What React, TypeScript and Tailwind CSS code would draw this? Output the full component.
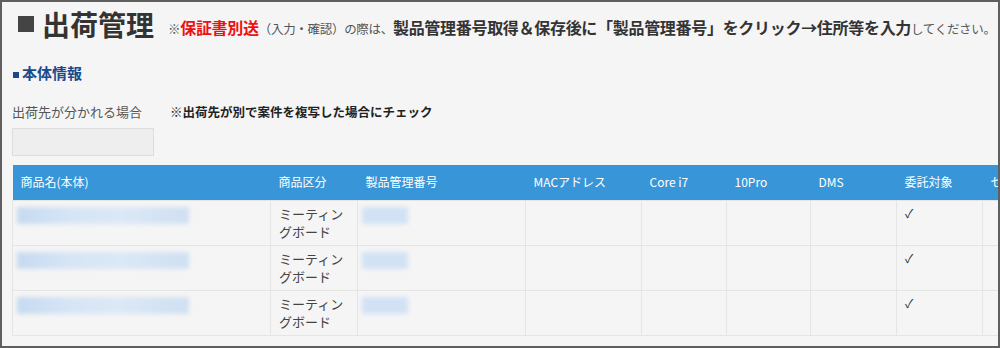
export default function App() {
  const cols = [
    { label: "商品名(本体)", w: "w-[258px]" },
    { label: "商品区分", w: "w-[87px]" },
    { label: "製品管理番号", w: "w-[168px]" },
    { label: "MACアドレス", w: "w-[116px]" },
    { label: "Core i7", w: "w-[85px]" },
    { label: "10Pro", w: "w-[84px]" },
    { label: "DMS", w: "w-[86px]" },
    { label: "委託対象", w: "w-[86px]" },
    { label: "セット", w: "w-[90px]" },
  ];
  const rows = [1, 2, 3];

  return (
    <div className="w-[1000px] h-[348px] border-2 border-[#5f5f5f] bg-[#f5f5f5] overflow-hidden font-['Noto_Sans_CJK_JP','Noto_Sans',sans-serif] text-[#333]">
      <div className="pl-[16px] pt-[7px] flex items-center whitespace-nowrap">
        <div className="w-[16px] h-[16px] bg-[#444] mr-[8px]" />
        <h1 className="text-[28px] leading-[30px] font-bold text-[#333]">出荷管理</h1>
        <p className="ml-[14px] mt-[6px] text-[12.5px] text-[#555] tracking-[-0.3px]">
          ※<span className="text-[16px] font-bold text-[#ee1111]">保証書別送</span>
          （入力・確認）の際は、
          <span className="text-[16px] font-bold text-[#333]">
            製品管理番号取得＆保存後に「製品管理番号」をクリック→住所等を入力
          </span>
          してください。
        </p>
      </div>

      <div className="pl-[11px] mt-[24px] flex items-center">
        <div className="w-[6px] h-[6px] bg-[#1a4a8c] mr-[3px] mt-[3px]" />
        <h2 className="text-[15px] leading-[20px] font-bold text-[#1a4a8c]">本体情報</h2>
      </div>

      <div className="pl-[10px] mt-[20px] flex items-start">
        <div className="w-[158px]">
          <div className="text-[13px] leading-[18px] text-[#555]">出荷先が分かれる場合</div>
          <div className="mt-[7px] w-[142px] h-[28px] bg-[#eeeeee] border border-[#dddddd]" />
        </div>
        <div className="text-[12.5px] leading-[18px] font-bold text-[#222]">
          ※出荷先が別で案件を複写した場合にチェック
        </div>
      </div>

      <div className="pl-[10px] mt-[9px]">
        <table className="table-fixed border-collapse w-[1050px] text-[12px]">
          <thead>
            <tr className="bg-[#3896d8] h-[35px]">
              {cols.map((c) => (
                <th
                  key={c.label}
                  className={`${c.w} text-left font-normal text-white px-[8px] align-middle`}
                >
                  {c.label}
                </th>
              ))}
            </tr>
          </thead>
          <tbody>
            {rows.map((r) => (
              <tr key={r} className="h-[45px]">
                <td className="border border-[#e4e6e6] align-top px-[4px] pt-[6px]">
                  <div className="w-[172px] h-[17px] bg-[linear-gradient(90deg,#c6daf0,#d6e5f5_30%,#dbe8f6_60%,#cfe0f2)] blur-[2px] rounded-[2px]" />
                </td>
                <td className="border border-[#e4e6e6] align-top px-[8px] pt-[4px] text-[13px] leading-[18px] text-[#444]">
                  ミーティン
                  <br />
                  グボード
                </td>
                <td className="border border-[#e4e6e6] align-top px-[4px] pt-[6px]">
                  <div className="w-[46px] h-[17px] bg-[#d2e2f4] blur-[2px] rounded-[2px]" />
                </td>
                <td className="border border-[#e4e6e6]" />
                <td className="border border-[#e4e6e6]" />
                <td className="border border-[#e4e6e6]" />
                <td className="border border-[#e4e6e6]" />
                <td className="border border-[#e4e6e6] align-top px-[8px] pt-[3px] text-[12px] leading-[18px] text-[#333]">
                  ✓
                </td>
                <td className="border border-[#e4e6e6]" />
              </tr>
            ))}
          </tbody>
        </table>
      </div>
    </div>
  );
}
